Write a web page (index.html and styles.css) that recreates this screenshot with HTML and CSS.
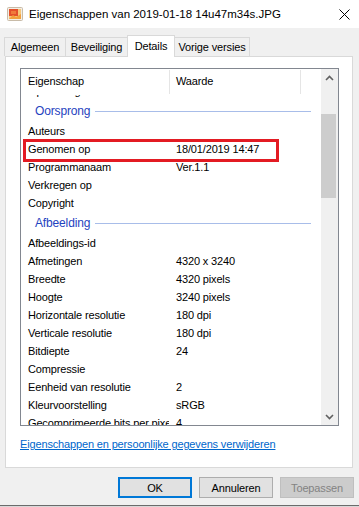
FILE: index.html
```html
<!DOCTYPE html>
<html lang="nl">

<head>
    <meta charset="UTF-8">
    <title>Eigenschappen van 2019-01-18 14u47m34s.JPG</title>
    <link rel="stylesheet" href="styles.css">
</head>

<body>
    <div class="titlebar">
        <svg class="app-icon" width="16" height="14" viewBox="0 0 16 14">
            <rect x="0.5" y="0.5" width="15" height="13" rx="1" fill="#f3eee6" stroke="#c8bba8" />
            <rect x="2" y="2" width="12" height="10" fill="#f6c77a" />
            <path d="M2 2 H11 V9 H2 Z" fill="#e4502a" />
            <path d="M4 4 H9 V7 H4 Z" fill="#f07a3a" />
            <path d="M2 12 L6 8 L9 10 L14 7 V12 Z" fill="#f2a03c" />
        </svg>
        <span class="title">Eigenschappen van 2019-01-18 14u47m34s.JPG</span>
        <svg class="close" width="11" height="11" viewBox="0 0 11 11">
            <path d="M0.5 0.5 L10.5 10.5 M10.5 0.5 L0.5 10.5" stroke="#000" stroke-width="1" fill="none" />
        </svg>
    </div>

    <div class="dialog">
        <div class="tabs">
            <div class="tab tab-1">Algemeen</div>
            <div class="tab tab-2">Beveiliging</div>
            <div class="tab tab-3 active">Details</div>
            <div class="tab tab-4">Vorige versies</div>
        </div>

        <div class="panel">
            <div class="listbox">
                <div class="list">
                    <div class="list-head">
                        <div class="head-name">Eigenschap</div>
                        <div class="head-value">Waarde</div>
                        <div class="head-rest"></div>
                    </div>
                    <div class="list-view">
                        <div class="list-scroll">
                            <div class="row"><span class="name">Opmerkingen</span><span class="value"></span></div>
                            <div class="group">Oorsprong</div>
                            <div class="row"><span class="name">Auteurs</span><span class="value"></span></div>
                            <div class="row">
                                <span class="name">Genomen op</span><span class="value">18/01/2019 14:47</span>
                                <span class="highlight"></span>
                            </div>
                            <div class="row"><span class="name">Programmanaam</span><span class="value">Ver.1.1</span></div>
                            <div class="row"><span class="name">Verkregen op</span><span class="value"></span></div>
                            <div class="row"><span class="name">Copyright</span><span class="value"></span></div>
                            <div class="group">Afbeelding</div>
                            <div class="row"><span class="name">Afbeeldings-id</span><span class="value"></span></div>
                            <div class="row"><span class="name">Afmetingen</span><span class="value">4320 x 3240</span></div>
                            <div class="row"><span class="name">Breedte</span><span class="value">4320 pixels</span></div>
                            <div class="row"><span class="name">Hoogte</span><span class="value">3240 pixels</span></div>
                            <div class="row"><span class="name">Horizontale resolutie</span><span class="value">180 dpi</span></div>
                            <div class="row"><span class="name">Verticale resolutie</span><span class="value">180 dpi</span></div>
                            <div class="row"><span class="name">Bitdiepte</span><span class="value">24</span></div>
                            <div class="row"><span class="name">Compressie</span><span class="value"></span></div>
                            <div class="row"><span class="name">Eenheid van resolutie</span><span class="value">2</span></div>
                            <div class="row"><span class="name">Kleurvoorstelling</span><span class="value">sRGB</span></div>
                            <div class="row"><span class="name">Gecomprimeerde bits per pixel</span><span class="value">4</span></div>
                            <div class="row"><span class="name">Camerafabrikant</span><span class="value"></span></div>
                        </div>
                    </div>
                </div>
                <div class="scrollbar">
                    <div class="sb-btn">
                        <svg width="9" height="6" viewBox="0 0 9 6"><path d="M1 5 L4.5 1.5 L8 5" stroke="#606060" stroke-width="1.6" fill="none" /></svg>
                    </div>
                    <div class="sb-track"><div class="sb-thumb"></div></div>
                    <div class="sb-btn">
                        <svg width="9" height="6" viewBox="0 0 9 6"><path d="M1 1 L4.5 4.5 L8 1" stroke="#606060" stroke-width="1.6" fill="none" /></svg>
                    </div>
                </div>
            </div>
            <a class="remove-link" href="#">Eigenschappen en persoonlijke gegevens verwijderen</a>
        </div>

        <div class="buttons">
            <button class="btn default">OK</button>
            <button class="btn">Annuleren</button>
            <button class="btn" disabled>Toepassen</button>
        </div>
        <div class="window-edge"></div>
    </div>
</body>

</html>
```

FILE: styles.css
```css
* {
    margin: 0;
    padding: 0;
    box-sizing: border-box;
}

body {
    width: 359px;
    height: 507px;
    overflow: hidden;
    background-color: #f0f0f0;
    font-family: "Liberation Sans", Arial, sans-serif;
    font-size: 11px;
    letter-spacing: -0.15px;
    color: #000;
}

/* Title bar */
.titlebar {
    height: 28px;
    background-color: #fff;
    display: flex;
    align-items: center;
    padding-left: 7px;
}

.app-icon {
    margin-right: 6px;
}

.title {
    flex: 1;
    font-size: 11.5px;
    letter-spacing: 0;
}

.close {
    margin-right: 9px;
}

/* Tabs */
.dialog {
    padding-top: 7px;
}

.tabs {
    display: flex;
    align-items: flex-end;
    height: 21px;
    padding-left: 4px;
}

.tab {
    height: 19px;
    line-height: 18px;
    text-align: center;
    border: 1px solid #d9d9d9;
    border-bottom: none;
    background-color: #f0f0f0;
    margin-right: -1px;
    white-space: nowrap;
}

.tab-1 { width: 62px; }
.tab-2 { width: 63px; }
.tab-3 { width: 48px; }
.tab-4 { width: 76px; }

.tab.active {
    height: 22px;
    line-height: 20px;
    background-color: #fff;
    margin-bottom: -1px;
    position: relative;
    z-index: 1;
}

/* Panel */
.panel {
    margin-left: 5px;
    width: 348px;
    height: 412px;
    border: 1px solid #d9d9d9;
    background-color: #fff;
    padding: 11px 0 0 14px;
}

.listbox {
    width: 319px;
    height: 358px;
    border: 1px solid #828790;
    display: flex;
}

.list {
    flex: 1;
    display: flex;
    flex-direction: column;
    min-width: 0;
}

.list-head {
    height: 26px;
    display: flex;
    padding: 1px 0;
}

.head-name {
    width: 148px;
    padding-left: 7px;
    line-height: 23px;
}

.head-value {
    width: 132px;
    padding-left: 6px;
    line-height: 23px;
    border-left: 1px solid #e5e5e5;
    border-right: 1px solid #e5e5e5;
}

.head-rest {
    flex: 1;
}

.list-view {
    flex: 1;
    overflow: hidden;
}

.list-scroll {
    margin-top: -13px;
}

.row {
    display: flex;
    height: 18px;
    line-height: 18px;
    position: relative;
    white-space: nowrap;
}

.row .name {
    width: 148px;
    padding-left: 7px;
    overflow: hidden;
}

.row .value {
    padding-left: 7px;
}

.group {
    height: 22px;
    display: flex;
    align-items: center;
    padding: 0 10px 1px 14px;
    font-size: 12px;
    color: #1f43c0;
}

.group::after {
    content: "";
    flex: 1;
    height: 1px;
    margin: 2px 0 0 5px;
    background-color: #a8bde9;
}

/* red annotation round the "Genomen op" row */
.highlight {
    position: absolute;
    left: 2px;
    top: -1px;
    width: 256px;
    height: 23px;
    border: 3px solid #e31b23;
}

/* Scrollbar */
.scrollbar {
    width: 17px;
    background-color: #f0f0f0;
    display: flex;
    flex-direction: column;
}

.sb-btn {
    height: 17px;
    display: flex;
    align-items: center;
    justify-content: center;
}

.sb-track {
    flex: 1;
    padding-top: 28px;
}

.sb-thumb {
    width: 15px;
    height: 84px;
    background-color: #cdcdcd;
}

.remove-link {
    display: block;
    width: max-content;
    margin-top: 10px;
    line-height: 16px;
    color: #0066cc;
    text-decoration: underline;
}

/* Buttons */
.buttons {
    display: flex;
    justify-content: flex-end;
    gap: 7px;
    padding: 9px 5px 0 0;
}

.btn {
    width: 74px;
    height: 21px;
    border: 1px solid #adadad;
    background-color: #e1e1e1;
    font-family: inherit;
    font-size: 11px;
    letter-spacing: -0.15px;
    color: #000;
}

.btn.default {
    border: 2px solid #0078d7;
}

.btn:disabled {
    background-color: #cccccc;
    border-color: #bfbfbf;
    color: #838383;
}

.window-edge {
    margin-top: 7px;
    height: 2px;
    border-top: 1px solid #6b6b6b;
    background-color: #d8d8d8;
}
```
